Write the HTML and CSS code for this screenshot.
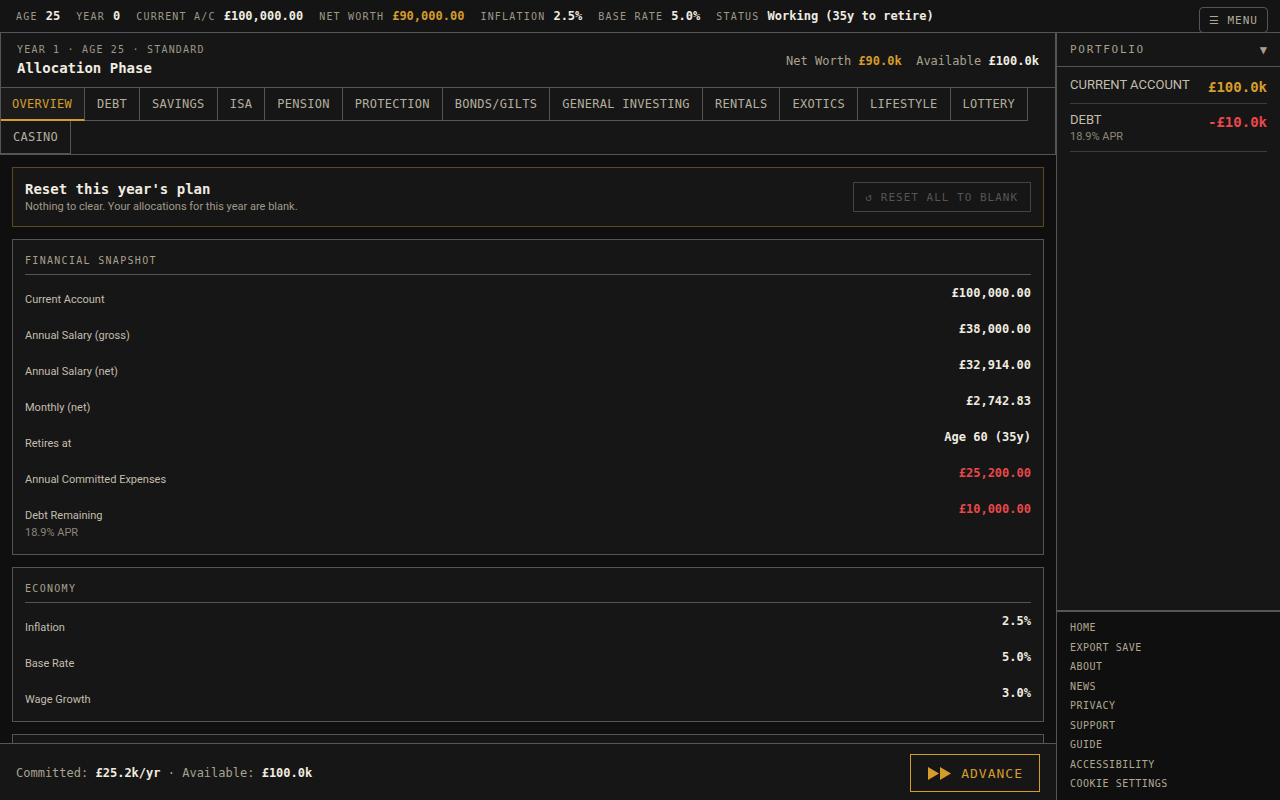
FILE: index.html
```html
<!DOCTYPE html>
<html lang="en">
<head>
  <meta charset="UTF-8" />
  <meta name="viewport" content="width=device-width, initial-scale=1.0" />
  <title>Allocation Phase - Year 1</title>
  <link rel="stylesheet" href="styles.css">
</head>
<body>
  <header class="topbar">
    <div class="stats">
      <span class="stat"><span class="stat-label">AGE</span><span class="stat-value">25</span></span>
      <span class="stat"><span class="stat-label">YEAR</span><span class="stat-value">0</span></span>
      <span class="stat"><span class="stat-label">CURRENT A/C</span><span class="stat-value">£100,000.00</span></span>
      <span class="stat"><span class="stat-label">NET WORTH</span><span class="stat-value gold">£90,000.00</span></span>
      <span class="stat"><span class="stat-label">INFLATION</span><span class="stat-value">2.5%</span></span>
      <span class="stat"><span class="stat-label">BASE RATE</span><span class="stat-value">5.0%</span></span>
      <span class="stat"><span class="stat-label">STATUS</span><span class="stat-value">Working (35y to retire)</span></span>
    </div>
    <button class="menu-btn">☰ MENU</button>
  </header>

  <div class="layout">
    <main class="main">
      <section class="phase">
        <div>
          <div class="phase-meta">YEAR 1 · AGE 25 · STANDARD</div>
          <h1 class="phase-title">Allocation Phase</h1>
        </div>
        <div class="phase-summary">
          Net Worth <b class="gold">£90.0k</b>&nbsp;&nbsp;Available <b>£100.0k</b>
        </div>
      </section>

      <nav class="tabs">
        <a class="tab active">OVERVIEW</a>
        <a class="tab">DEBT</a>
        <a class="tab">SAVINGS</a>
        <a class="tab">ISA</a>
        <a class="tab">PENSION</a>
        <a class="tab">PROTECTION</a>
        <a class="tab">BONDS/GILTS</a>
        <a class="tab">GENERAL INVESTING</a>
        <a class="tab">RENTALS</a>
        <a class="tab">EXOTICS</a>
        <a class="tab">LIFESTYLE</a>
        <a class="tab">LOTTERY</a>
        <a class="tab">CASINO</a>
      </nav>

      <div class="content">
        <div class="card reset-card">
          <div>
            <div class="reset-title">Reset this year's plan</div>
            <div class="reset-sub">Nothing to clear. Your allocations for this year are blank.</div>
          </div>
          <button class="reset-btn" disabled>↺ RESET ALL TO BLANK</button>
        </div>

        <div class="card">
          <div class="card-title">FINANCIAL SNAPSHOT</div>
          <div class="row"><div class="row-label">Current Account</div><div class="row-value">£100,000.00</div></div>
          <div class="row"><div class="row-label">Annual Salary (gross)</div><div class="row-value">£38,000.00</div></div>
          <div class="row"><div class="row-label">Annual Salary (net)</div><div class="row-value">£32,914.00</div></div>
          <div class="row"><div class="row-label">Monthly (net)</div><div class="row-value">£2,742.83</div></div>
          <div class="row"><div class="row-label">Retires at</div><div class="row-value">Age 60 (35y)</div></div>
          <div class="row"><div class="row-label">Annual Committed Expenses</div><div class="row-value red">£25,200.00</div></div>
          <div class="row">
            <div class="row-label">Debt Remaining<div class="row-sub">18.9% APR</div></div>
            <div class="row-value red">£10,000.00</div>
          </div>
        </div>

        <div class="card">
          <div class="card-title">ECONOMY</div>
          <div class="row"><div class="row-label">Inflation</div><div class="row-value">2.5%</div></div>
          <div class="row"><div class="row-label">Base Rate</div><div class="row-value">5.0%</div></div>
          <div class="row"><div class="row-label">Wage Growth</div><div class="row-value">3.0%</div></div>
        </div>

        <div class="card card-empty"></div>
      </div>

      <footer class="footer">
        <div class="footer-summary">
          Committed: <b>£25.2k/yr</b> · Available: <b>£100.0k</b>
        </div>
        <button class="advance-btn">
          <svg width="24" height="13" viewBox="0 0 24 13"><path d="M0 0 L11 6.5 L0 13 Z M12 0 L23 6.5 L12 13 Z" fill="#d59c2b"/></svg>
          ADVANCE
        </button>
      </footer>
    </main>

    <aside class="sidebar">
      <div class="portfolio">
        <div class="portfolio-head">
          <span>PORTFOLIO</span>
          <span class="caret">▼</span>
        </div>
        <div class="holding">
          <div class="holding-name">CURRENT ACCOUNT</div>
          <div class="holding-value gold">£100.0k</div>
        </div>
        <div class="holding holding-detail">
          <div class="holding-name">DEBT<div class="holding-sub">18.9% APR</div></div>
          <div class="holding-value red">-£10.0k</div>
        </div>
      </div>
      <nav class="links">
        <a>HOME</a>
        <a>EXPORT SAVE</a>
        <a>ABOUT</a>
        <a>NEWS</a>
        <a>PRIVACY</a>
        <a>SUPPORT</a>
        <a>GUIDE</a>
        <a>ACCESSIBILITY</a>
        <a>COOKIE SETTINGS</a>
      </nav>
    </aside>
  </div>
</body>
</html>
```

FILE: styles.css
```css
* {
  box-sizing: border-box;
}

body {
  margin: 0;
  height: 100vh;
  overflow: hidden;
  background-color: #0f0f0f;
  color: #f0ece0;
  font-family: "DejaVu Sans Mono", "Liberation Mono", monospace;
  font-size: 12px;
}

b {
  color: #f0ece0;
}

.gold { color: #d59c2b; }
.red { color: #e9474a; }

/* Top status bar */
.topbar {
  height: 33px;
  display: flex;
  align-items: center;
  justify-content: space-between;
  padding: 0 12px 0 16px;
  background-color: #141414;
  border-bottom: 1px solid #555;
}

.stats {
  display: flex;
}

.stat {
  margin-right: 16px;
}

.stat-label {
  font-size: 10px;
  letter-spacing: 1.2px;
  color: #9e9888;
  margin-right: 8px;
}

.stat-value {
  font-weight: bold;
}

.menu-btn {
  align-self: flex-end;
  height: 26px;
  padding: 0 9px;
  margin-bottom: -1px;
  background: #141414;
  border: 1px solid #555;
  border-radius: 4px;
  color: #b0aa9a;
  font-family: inherit;
  font-size: 11px;
  letter-spacing: 1px;
}

.layout {
  display: flex;
  height: calc(100vh - 33px);
}

.main {
  width: 1056px;
  display: flex;
  flex-direction: column;
}

/* Phase header */
.phase {
  display: flex;
  justify-content: space-between;
  align-items: center;
  padding: 10px 16px 10px 16px;
  background-color: #161616;
  border: 1px solid #555;
  border-top: none;
}

.phase-meta {
  font-size: 10px;
  line-height: 14px;
  letter-spacing: 1.2px;
  color: #9e9888;
}

.phase-title {
  margin: 2px 0 0;
  font-size: 14px;
  line-height: 18px;
}

.phase-summary {
  color: #a8a290;
  padding-top: 2px;
}

/* Tabs */
.tabs {
  display: flex;
  flex-wrap: wrap;
  background-color: #161616;
  border: 1px solid #555;
  border-top: none;
}

.tab {
  height: 33px;
  line-height: 32px;
  padding: 0 12px;
  font-size: 12px;
  letter-spacing: 0.28px;
  color: #b4ae9e;
  border-right: 1px solid #555;
  border-bottom: 1px solid #555;
  cursor: pointer;
}

.tab:first-child {
  padding-left: 11px;
}

.tab.active {
  color: #d59c2b;
  background-color: #1b1b1b;
  border-bottom: 2px solid #d59c2b;
}

/* Content */
.content {
  flex: 1;
  overflow: hidden;
  padding: 12px;
}

.card {
  background-color: #161616;
  border: 1px solid #555;
  padding: 13px 12px 10px;
  margin-bottom: 12px;
}

.card-empty {
  height: 60px;
}

.reset-card {
  display: flex;
  justify-content: space-between;
  align-items: center;
  border-color: #5c4a1e;
  padding: 12px 12px 12px;
}

.reset-title {
  font-size: 14px;
  line-height: 18px;
  font-weight: bold;
}

.reset-sub {
  margin-top: 2px;
  font-family: Roboto, "Noto Sans", sans-serif;
  font-size: 11px;
  line-height: 14px;
  color: #a09a8a;
}

.reset-btn {
  height: 30px;
  padding: 0 12px;
  background: transparent;
  border: 1px solid #444;
  color: #555;
  font-family: inherit;
  font-size: 11px;
  letter-spacing: 1px;
}

.card-title {
  font-size: 10px;
  line-height: 16px;
  letter-spacing: 1.3px;
  color: #a8a08c;
  padding-bottom: 5px;
  border-bottom: 1px solid #555;
}

.row {
  display: flex;
  justify-content: space-between;
  align-items: flex-start;
  padding: 10px 0 4px;
}

.row-label {
  margin-top: 8px;
  font-family: Roboto, "Noto Sans", sans-serif;
  font-size: 11px;
  line-height: 14px;
  color: #c4bdad;
}

.row-sub {
  margin-top: 3px;
  color: #8c8678;
}

.row-value {
  line-height: 16px;
  font-weight: bold;
}

/* Footer */
.footer {
  height: 57px;
  display: flex;
  align-items: center;
  justify-content: space-between;
  padding: 2px 16px 0;
  background-color: #161616;
  border-top: 1px solid #555;
  color: #a8a290;
}

.advance-btn {
  display: flex;
  align-items: center;
  gap: 9px;
  height: 38px;
  padding: 0 16px 0 17px;
  background: transparent;
  border: 1px solid #d59c2b;
  color: #d59c2b;
  font-family: inherit;
  font-size: 13px;
  letter-spacing: 1px;
}

/* Sidebar */
.sidebar {
  flex: 1;
  display: flex;
  flex-direction: column;
  border-left: 1px solid #555;
}

.portfolio {
  height: 579px;
  background-color: #161616;
  border-bottom: 2px solid #555;
}

.portfolio-head {
  height: 34px;
  display: flex;
  justify-content: space-between;
  align-items: center;
  padding: 0 13px;
  border-bottom: 1px solid #555;
  font-size: 11px;
  letter-spacing: 1.7px;
  color: #a8a08c;
}

.caret {
  font-size: 12px;
  letter-spacing: 0;
}

.holding {
  display: flex;
  justify-content: space-between;
  align-items: flex-start;
  margin: 0 13px;
  padding: 10px 0 8px;
  border-bottom: 1px solid #3c3c3c;
}

.holding-detail {
  padding: 8px 0 7px;
}

.holding-name {
  font-family: Roboto, "Noto Sans", sans-serif;
  font-size: 13px;
  line-height: 16px;
  color: #c4bdad;
}

.holding-sub {
  margin-top: 2px;
  font-size: 11px;
  line-height: 14px;
  color: #8c8678;
}

.holding-value {
  margin-top: 2px;
  font-size: 14px;
  line-height: 16px;
  font-weight: bold;
}

.links {
  display: flex;
  flex-direction: column;
  padding: 6px 13px;
}

.links a {
  font-size: 10px;
  line-height: 19.5px;
  letter-spacing: 0.5px;
  color: #b0a890;
  cursor: pointer;
}
```
